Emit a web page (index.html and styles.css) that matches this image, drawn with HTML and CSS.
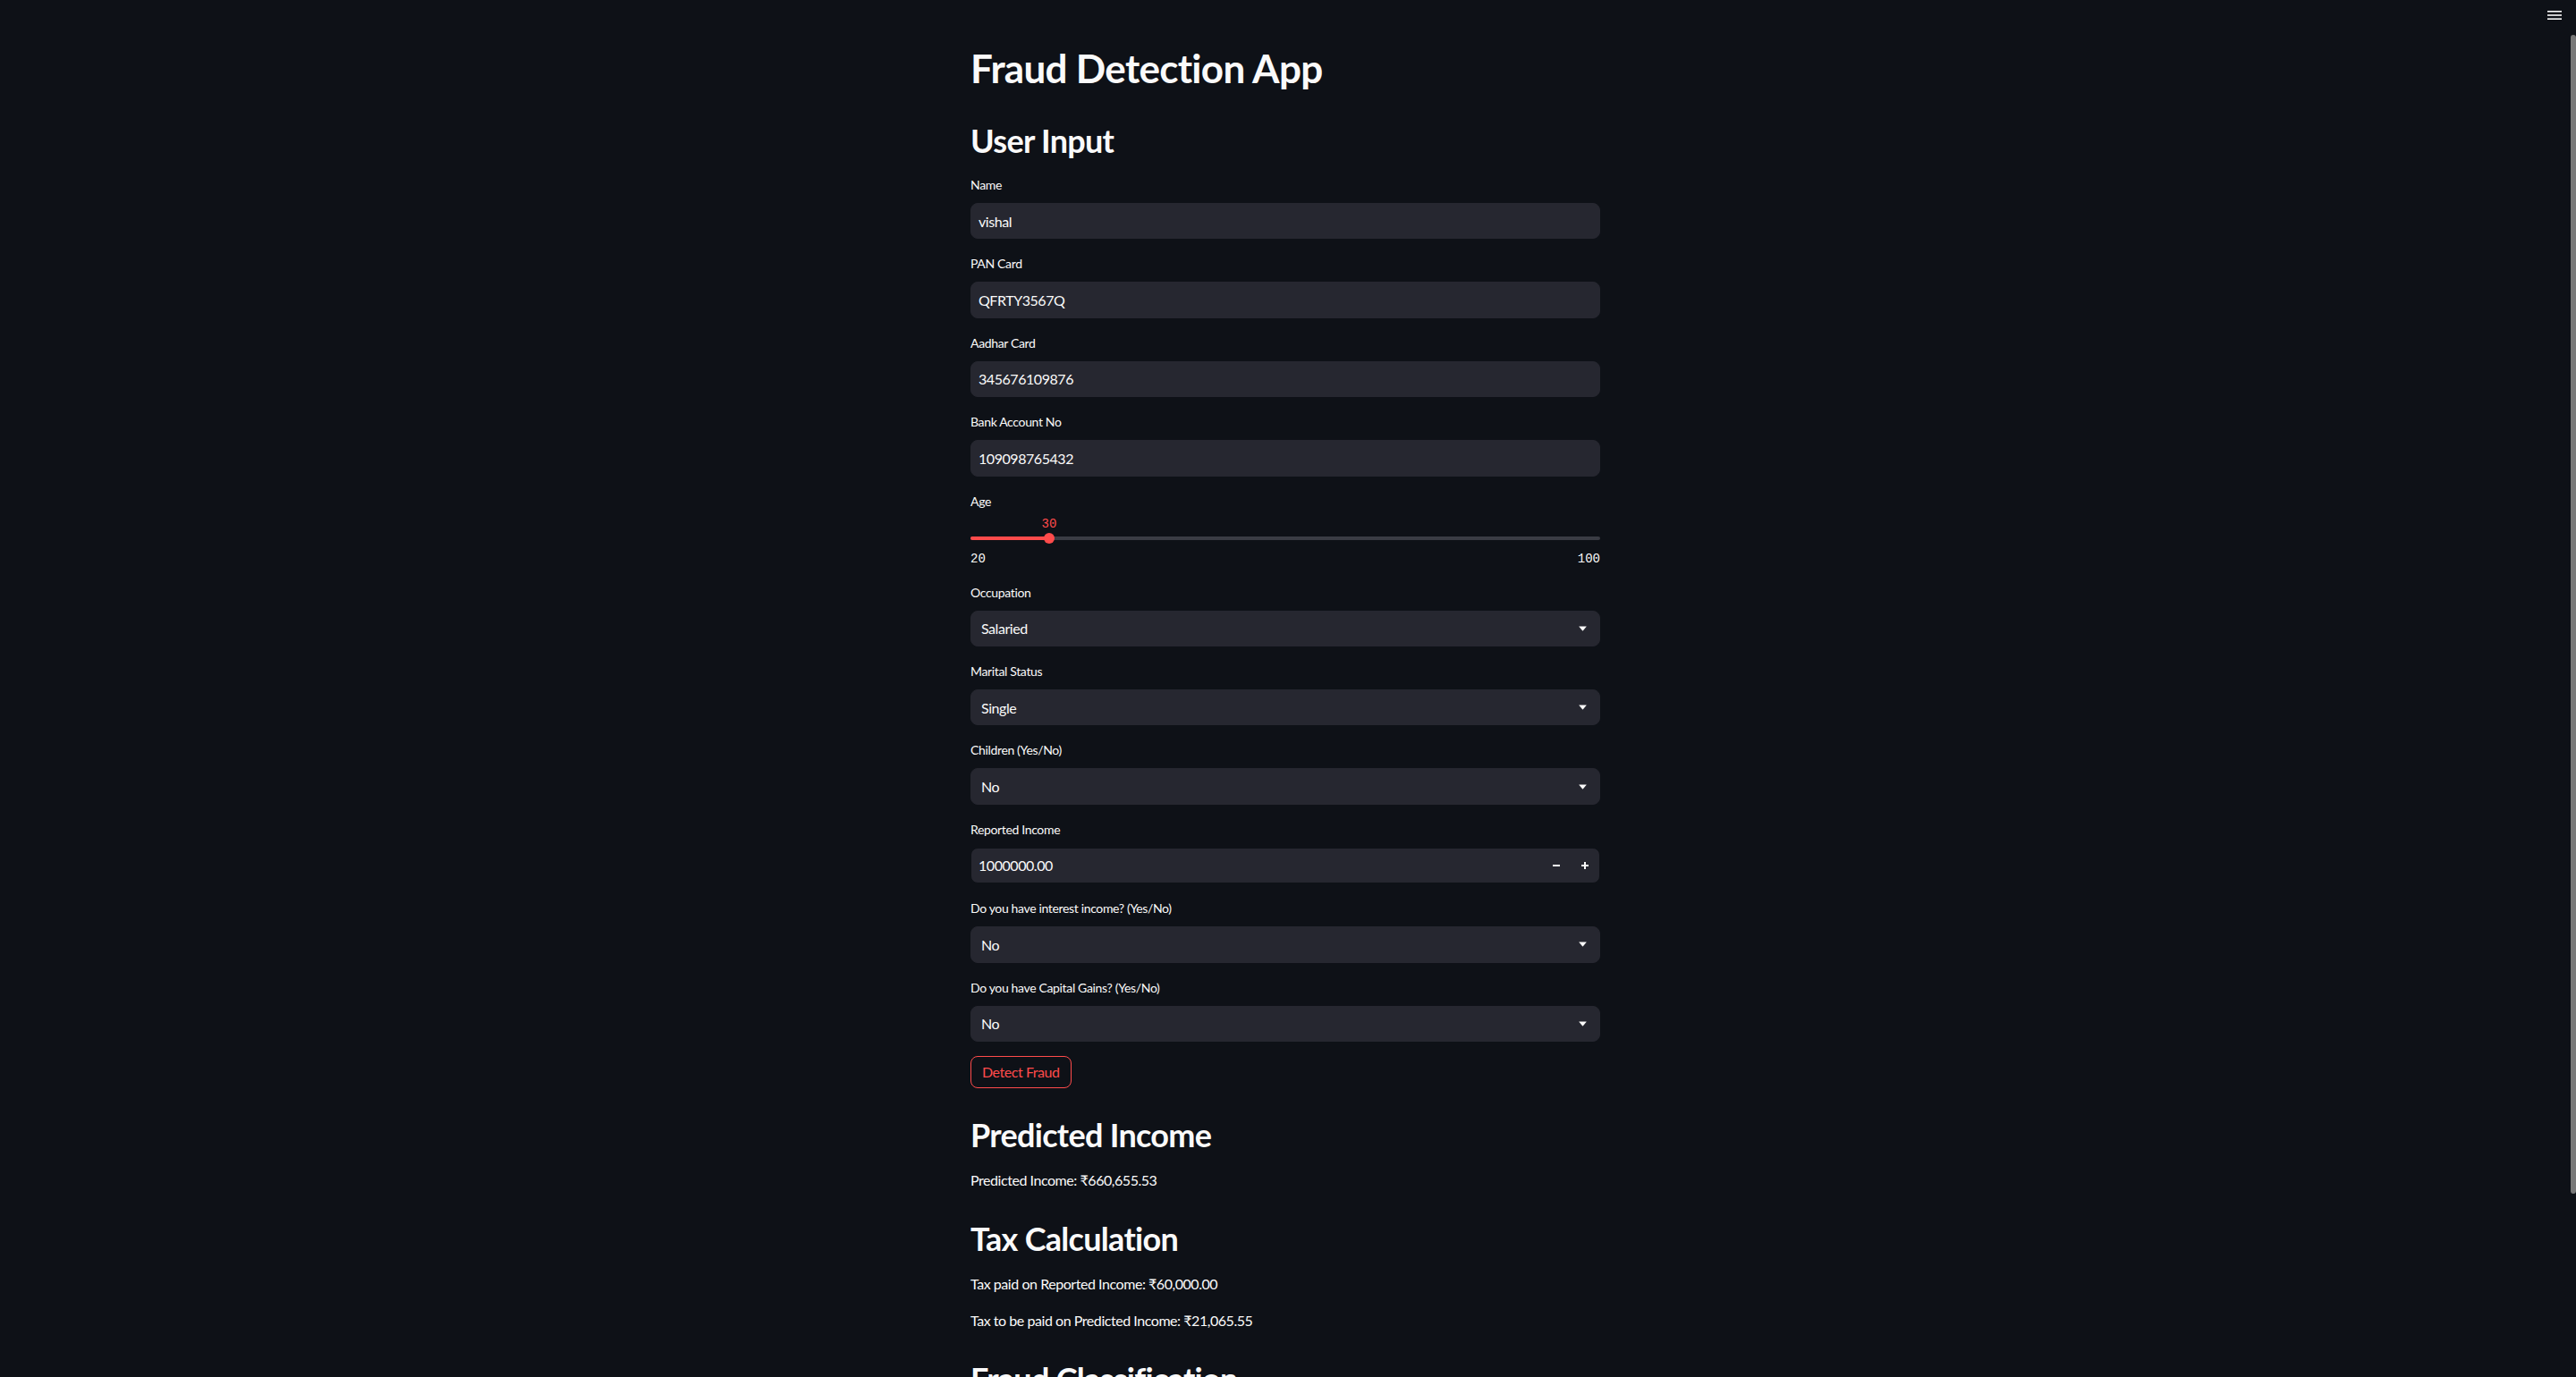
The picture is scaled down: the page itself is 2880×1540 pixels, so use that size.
FILE: index.html
```html
<!DOCTYPE html>
<html lang="en">
<head>
<meta charset="utf-8">
<title>Fraud Detection App</title>
<link rel="stylesheet" href="styles.css">
</head>
<body>
<div class="app">
  <header class="toolbar">
    <button class="menu-btn" aria-label="Main menu">
      <svg width="16" height="10" viewBox="0 0 16 10"><rect x="0" y="0" width="16" height="1.6" fill="#fafafa"/><rect x="0" y="4.2" width="16" height="1.6" fill="#fafafa"/><rect x="0" y="8.4" width="16" height="1.6" fill="#fafafa"/></svg>
    </button>
  </header>
  <main class="main-area">
    <div class="block">
      <h1>Fraud Detection App</h1>
      <h2>User Input</h2>

      <div class="widget">
        <label class="w-label">Name</label>
        <div class="field"><span class="value">vishal</span></div>
      </div>
      <div class="widget">
        <label class="w-label">PAN Card</label>
        <div class="field"><span class="value">QFRTY3567Q</span></div>
      </div>
      <div class="widget">
        <label class="w-label">Aadhar Card</label>
        <div class="field"><span class="value">345676109876</span></div>
      </div>
      <div class="widget">
        <label class="w-label">Bank Account No</label>
        <div class="field"><span class="value">109098765432</span></div>
      </div>

      <div class="widget">
        <label class="w-label slider-label">Age</label>
        <div class="slider">
          <div class="slider-value-row"><span class="slider-value" style="left:12.5%">30</span></div>
          <div class="slider-track-row">
            <div class="track"><div class="track-fill" style="width:12.5%"></div></div>
            <span class="thumb" style="left:12.5%"></span>
          </div>
          <div class="slider-minmax"><span>20</span><span>100</span></div>
        </div>
      </div>

      <div class="widget">
        <label class="w-label">Occupation</label>
        <div class="field select"><span class="value">Salaried</span><svg class="caret" width="9" height="6" viewBox="0 0 9 6"><path d="M0.6 0.5 H8.4 Q8.9 0.5 8.5 1 L4.9 5.3 Q4.5 5.7 4.1 5.3 L0.5 1 Q0.1 0.5 0.6 0.5 Z" fill="#fafafa"/></svg></div>
      </div>
      <div class="widget">
        <label class="w-label">Marital Status</label>
        <div class="field select"><span class="value">Single</span><svg class="caret" width="9" height="6" viewBox="0 0 9 6"><path d="M0.6 0.5 H8.4 Q8.9 0.5 8.5 1 L4.9 5.3 Q4.5 5.7 4.1 5.3 L0.5 1 Q0.1 0.5 0.6 0.5 Z" fill="#fafafa"/></svg></div>
      </div>
      <div class="widget">
        <label class="w-label">Children (Yes/No)</label>
        <div class="field select"><span class="value">No</span><svg class="caret" width="9" height="6" viewBox="0 0 9 6"><path d="M0.6 0.5 H8.4 Q8.9 0.5 8.5 1 L4.9 5.3 Q4.5 5.7 4.1 5.3 L0.5 1 Q0.1 0.5 0.6 0.5 Z" fill="#fafafa"/></svg></div>
      </div>
      <div class="widget">
        <label class="w-label">Reported Income</label>
        <div class="field number">
          <span class="value">1000000.00</span>
          <div class="steppers">
            <span class="step"><svg width="8" height="8" viewBox="0 0 8 8"><rect x="0" y="3" width="8" height="2" fill="#fafafa"/></svg></span>
            <span class="step"><svg width="8" height="8" viewBox="0 0 8 8"><rect x="0" y="3" width="8" height="2" fill="#fafafa"/><rect x="3" y="0" width="2" height="8" fill="#fafafa"/></svg></span>
          </div>
        </div>
      </div>
      <div class="widget">
        <label class="w-label">Do you have interest income? (Yes/No)</label>
        <div class="field select"><span class="value">No</span><svg class="caret" width="9" height="6" viewBox="0 0 9 6"><path d="M0.6 0.5 H8.4 Q8.9 0.5 8.5 1 L4.9 5.3 Q4.5 5.7 4.1 5.3 L0.5 1 Q0.1 0.5 0.6 0.5 Z" fill="#fafafa"/></svg></div>
      </div>
      <div class="widget">
        <label class="w-label">Do you have Capital Gains? (Yes/No)</label>
        <div class="field select"><span class="value">No</span><svg class="caret" width="9" height="6" viewBox="0 0 9 6"><path d="M0.6 0.5 H8.4 Q8.9 0.5 8.5 1 L4.9 5.3 Q4.5 5.7 4.1 5.3 L0.5 1 Q0.1 0.5 0.6 0.5 Z" fill="#fafafa"/></svg></div>
      </div>

      <button class="btn">Detect Fraud</button>

      <h2>Predicted Income</h2>
      <p>Predicted Income: ₹660,655.53</p>
      <h2>Tax Calculation</h2>
      <p>Tax paid on Reported Income: ₹60,000.00</p>
      <p>Tax to be paid on Predicted Income: ₹21,065.55</p>
      <h2>Fraud Classification</h2>
    </div>
  </main>
  <div class="scroll-track"><div class="scroll-thumb"></div></div>
</div>
</body>
</html>
```

FILE: styles.css
```css
* { box-sizing: border-box; }
html, body { margin: 0; padding: 0; }
body {
  background: #0e1117;
  color: #fafafa;
  font-family: Lato, "Noto Sans", "DejaVu Sans", sans-serif;
  overflow: hidden;
}
.app {
  position: relative;
  display: flex;
  height: 1540px;
  overflow: hidden;
}
.toolbar {
  position: absolute;
  top: 0;
  right: 0;
  padding: 12px 16px 0 0;
}
.menu-btn {
  display: block;
  padding: 0;
  margin: 0;
  border: 0;
  background: transparent;
  line-height: 0;
}
.main-area { flex: 1; }
.scroll-track { width: 6px; }
.scroll-thumb {
  margin-top: 39px;
  height: 1296px;
  background: #787878;
  border-radius: 3px;
}
.block {
  width: 704px;
  margin: 0 auto;
  padding-top: 50px;
  display: flex;
  flex-direction: column;
  gap: 16px;
}
h1 {
  margin: 0 0 2px;
  font-size: 44px;
  font-weight: 700;
  line-height: 1.2;
  letter-spacing: -0.7px;
}
h2 {
  margin: 0;
  padding-top: 15px;
  font-size: 36px;
  font-weight: 700;
  line-height: 1.2;
  letter-spacing: -0.7px;
}
p {
  margin: 0;
  font-size: 16px;
  line-height: 1.6;
  letter-spacing: -0.45px;
}
.widget { display: flex; flex-direction: column; }
.w-label {
  display: block;
  height: 24px;
  line-height: 24px;
  font-size: 14px;
  margin-bottom: 8px;
  letter-spacing: -0.35px;
}
.slider-label { margin-bottom: 0; }
.field {
  height: 40.4px;
  background: #262730;
  border: 1px solid #262730;
  border-radius: 8px;
  padding: 0 8px;
  display: flex;
  align-items: center;
  font-size: 16px;
  letter-spacing: -0.45px;
}
.select {
  padding: 0 14px 0 11px;
  justify-content: space-between;
}
.caret { display: block; }
.number {
  border-color: #0e1117;
  padding-right: 0;
  justify-content: space-between;
}
.steppers { display: flex; height: 100%; }
.step {
  width: 32px;
  display: flex;
  align-items: center;
  justify-content: center;
}
.step svg { display: block; }

.slider { display: flex; flex-direction: column; }
.slider-value-row {
  position: relative;
  height: 23px;
}
.slider-value {
  position: absolute;
  top: 3px;
  transform: translateX(-50%);
  font-family: "Liberation Mono", "DejaVu Sans Mono", monospace;
  font-size: 14px;
  line-height: 20px;
  color: #ff4b4b;
}
.slider-track-row {
  position: relative;
  height: 12px;
  padding-top: 4px;
}
.track {
  height: 4px;
  background: #3a3c44;
  border-radius: 2px;
  overflow: hidden;
}
.track-fill {
  height: 100%;
  background: #ff4b4b;
}
.thumb {
  position: absolute;
  top: 0;
  width: 12px;
  height: 12px;
  margin-left: -6px;
  border-radius: 50%;
  background: #ff4b4b;
}
.slider-minmax {
  margin-top: 8px;
  display: flex;
  justify-content: space-between;
  font-family: "Liberation Mono", "DejaVu Sans Mono", monospace;
  font-size: 14px;
  line-height: 19px;
}
.btn {
  align-self: flex-start;
  height: 36px;
  padding: 0 12px;
  border: 1px solid #ff4b4b;
  border-radius: 8px;
  background: transparent;
  color: #ff4b4b;
  font-family: inherit;
  font-size: 16px;
  line-height: 34px;
  letter-spacing: -0.45px;
}
```
